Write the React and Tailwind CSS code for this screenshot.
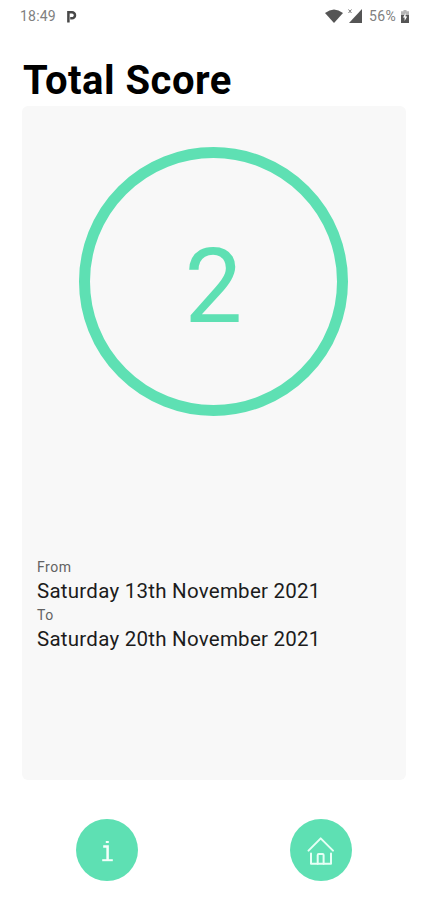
import React from "react";

const score = 2;

const period = [
  { label: "From", date: "Saturday 13th November 2021" },
  { label: "To", date: "Saturday 20th November 2021" },
];

function StatusBar() {
  return (
    <div className="flex h-8 items-center justify-between pl-5 pr-[18px] text-[#808080]">
      <div className="flex items-center gap-[10px]">
        <span className="text-[14px] leading-8 tracking-[0.2px]">18:49</span>
        <svg width="11" height="13" viewBox="0 0 11 13" fill="none" stroke="#484848">
          <path d="M2.4 12.4V2.3H6A2.9 2.9 0 0 1 6 8.3H4.2" strokeWidth="2.5" />
        </svg>
      </div>
      <div className="flex items-center">
        <svg width="18" height="14" viewBox="0 0 18 14" fill="#555">
          <path d="M0 4Q9-3 18 4L9 14Z" />
        </svg>
        <svg className="ml-[5px]" width="14" height="14" viewBox="0 0 14 14">
          <path d="M14 0V14H1Z" fill="#555" />
          <path d="M.5 .5l3 3.5M3.5 .5l-3 3.5" stroke="#777" strokeWidth="1" />
        </svg>
        <span className="ml-[7px] text-[14px] leading-8 tracking-[0.3px]">56%</span>
        <svg className="ml-[5px]" width="8" height="13" viewBox="0 0 8 13">
          <path d="M2.5 0h3v1.3H8V6H0V1.3h2.5Z" fill="#b5b5b5" />
          <path d="M0 5h8v8H0Z" fill="#555" />
          <path d="M4.6 3L2 7.6h1.6V11L6.2 6.5H4.6Z" fill="#fff" />
        </svg>
      </div>
    </div>
  );
}

function RoundButton({ label, children }) {
  return (
    <button
      aria-label={label}
      className="flex size-[62px] items-center justify-center rounded-full bg-[#5ee0b3]"
    >
      {children}
    </button>
  );
}

export default function App() {
  return (
    <div className="flex h-[900px] w-[427px] flex-col bg-white font-[Roboto,sans-serif]">
      <StatusBar />

      <h1 className="mt-[25px] ml-[23px] h-[49px] text-[40px] leading-[48px] font-bold tracking-[0.5px] text-black">
        Total Score
      </h1>

      <main className="mx-[22px] h-[674px] w-[384px] rounded-md bg-[#f8f8f8]">
        <div className="mt-[41px] ml-[57px] flex size-[269px] items-center justify-center rounded-full border-[11px] border-[#5ee0b3]">
          <span className="pt-[9px] text-[103px] leading-none text-[#5ee0b3]">{score}</span>
        </div>

        <div className="mt-[142px] ml-[15px]">
          {period.map((item) => (
            <div key={item.label}>
              <p className="h-[18px] text-[14px] leading-[18px] tracking-[0.5px] text-[#626262]">
                {item.label}
              </p>
              <p className="h-[30px] text-[20.5px] leading-[30px] tracking-[0.25px] text-[#1c1c1c]">
                {item.date}
              </p>
            </div>
          ))}
        </div>
      </main>

      <nav className="mt-[39px] ml-[76px] flex gap-[152px]">
        <RoundButton label="Info">
          <svg width="12" height="24" viewBox="0 0 12 24" fill="none" stroke="#f4fffb">
            <path d="M4.8 4h3" strokeWidth="2" />
            <path d="M2.2 8.5h4.4V22" strokeWidth="2.5" />
            <path d="M1.2 22.2h10.6" strokeWidth="2" />
          </svg>
        </RoundButton>
        <RoundButton label="Home">
          <svg
            width="28"
            height="30"
            viewBox="0 0 28 30"
            fill="none"
            stroke="#e6fff5"
            strokeWidth="2"
            strokeLinecap="round"
            strokeLinejoin="round"
          >
            <path d="M1.5 15.6L13.7 3.4L26 15.6" />
            <path d="M4 18.5V28.8H24V18.5" />
            <path d="M10.7 28.8V20Q10.7 19 11.7 19H15.6Q16.6 19 16.6 20V28.8" />
          </svg>
        </RoundButton>
      </nav>
    </div>
  );
}
